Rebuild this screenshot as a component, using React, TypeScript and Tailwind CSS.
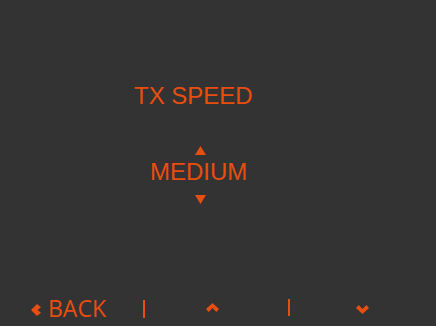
import React from 'react';

const ORANGE = '#e84e0f';

function Chevron({ dir }: { dir: 'left' | 'up' | 'down' }) {
	if (dir === 'left') {
		return (
			<svg width="10" height="12" viewBox="0 0 10 12" className="mt-[7px] shrink-0">
				<polygon points="0,6 6,0 10,3.3 6.6,6 10,8.7 6,12" fill={ORANGE} />
			</svg>
		);
	}
	if (dir === 'up') {
		return (
			<svg width="13" height="9" viewBox="0 0 13 9" className="mt-[6px] shrink-0">
				<polygon points="6.5,0 13,6 10.3,9 6.5,5 2.7,9 0,6" fill={ORANGE} />
			</svg>
		);
	}
	return (
		<svg width="13" height="9" viewBox="0 0 13 9" className="mt-[8px] shrink-0">
			<polygon points="0,3 2.7,0 6.5,4 10.3,0 13,3 6.5,9" fill={ORANGE} />
		</svg>
	);
}

function Triangle({ up }: { up?: boolean }) {
	return (
		<svg width="11" height="9" viewBox="0 0 11 9" className="shrink-0">
			<polygon points={up ? '5.5,0 11,9 0,9' : '0,0 11,0 5.5,9'} fill={ORANGE} />
		</svg>
	);
}

export default function App() {
	return (
		<div className="w-[436px] h-[326px] bg-[#333333] flex flex-col text-[#e84e0f]">
			{/* menu item */}
			<div className="h-[297px] flex flex-col font-['Liberation_Sans',Arial,sans-serif]">
				<div className="mt-[84px] pl-[134px] text-[24px] leading-none">TX SPEED</div>
				<div className="mt-[38px] pl-[195px]">
					<Triangle up />
				</div>
				<div className="mt-[5px] pl-[150px] text-[24px] leading-none">MEDIUM</div>
				<div className="mt-[11px] pl-[195px]">
					<Triangle />
				</div>
			</div>

			{/* nav bar */}
			<div className="h-[29px] flex items-start pl-[31px] font-['Open_Sans',sans-serif]">
				<Chevron dir="left" />
				<span className="ml-[7px] w-[95px] text-[23px] leading-none">BACK</span>
				<div className="mt-[3px] w-[2px] h-[18px] bg-[#e84e0f]" />
				<div className="ml-[61px]">
					<Chevron dir="up" />
				</div>
				<div className="ml-[69px] mt-[2px] w-[2px] h-[17px] bg-[#e84e0f]" />
				<div className="ml-[66px]">
					<Chevron dir="down" />
				</div>
			</div>
		</div>
	);
}
